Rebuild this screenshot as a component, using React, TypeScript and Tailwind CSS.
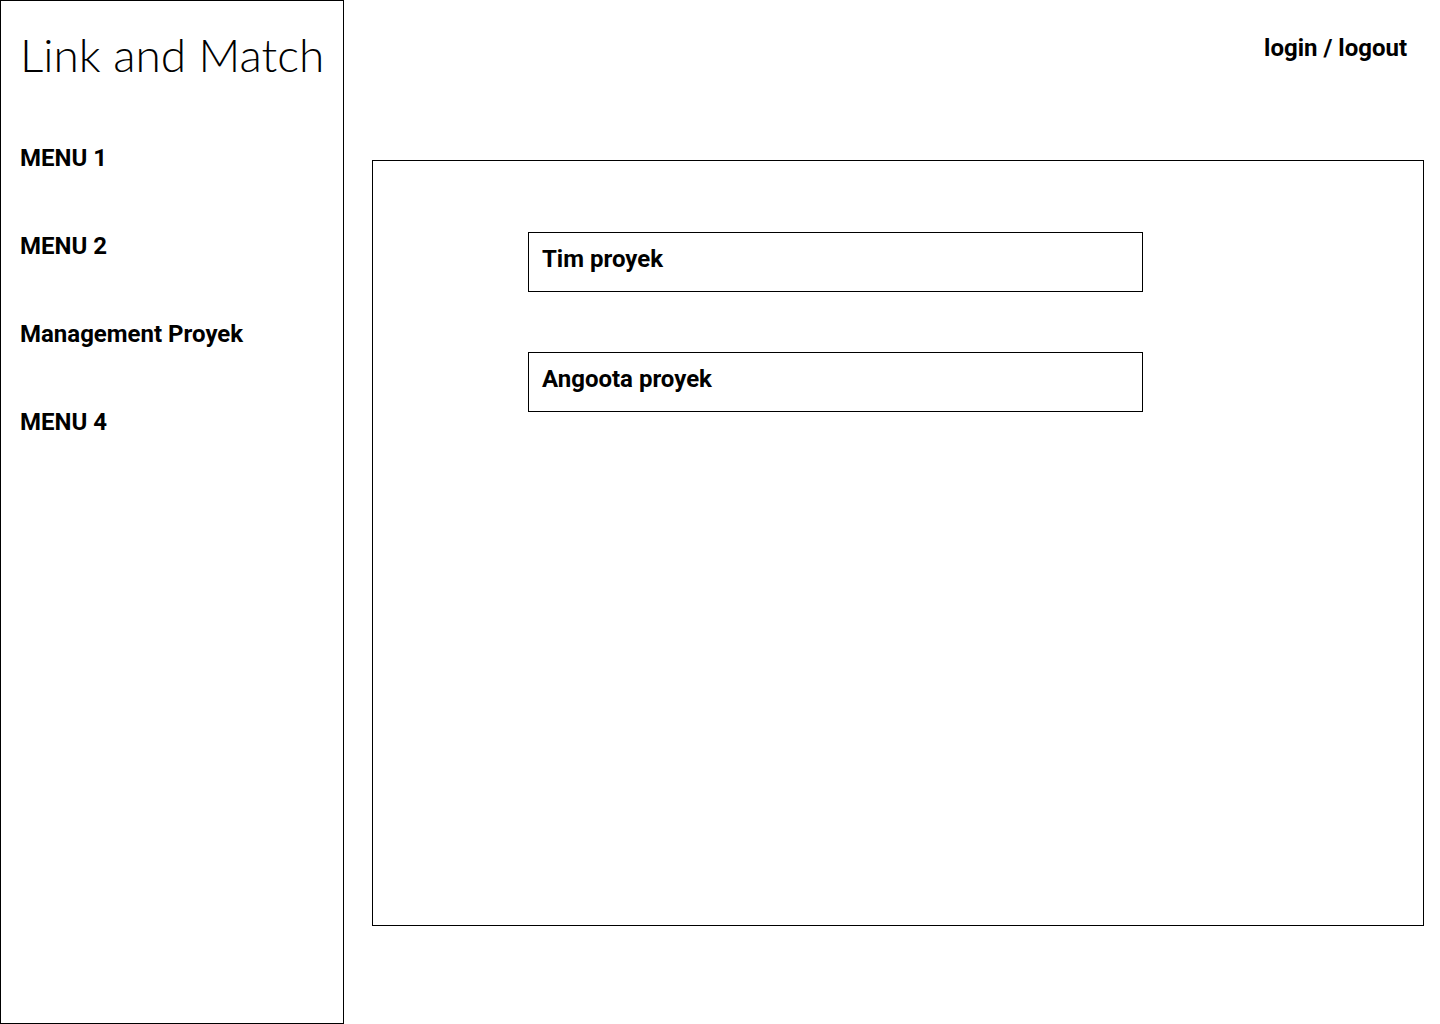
import React from "react";

export default function App() {
  const menus = ["MENU 1", "MENU 2", "Management Proyek", "MENU 4"];
  return (
    <div className="flex w-[1440px] h-[1024px] bg-white text-black" style={{ fontFamily: "Roboto, sans-serif" }}>
      <aside className="w-[344px] h-[1024px] border border-black flex flex-col shrink-0">
        <h1
          className="pl-[19px] pt-[27px] text-[46px] leading-[54px] font-light"
          style={{ fontFamily: "Lato, sans-serif" }}
        >
          Link and Match
        </h1>
        <nav className="flex flex-col gap-[60px] pl-[19px] mt-[62px]">
          {menus.map((m) => (
            <div key={m} className="text-[24px] leading-[28px] font-bold">
              {m}
            </div>
          ))}
        </nav>
      </aside>
      <main className="flex-1 flex flex-col pl-[28px] pr-[16px]">
        <div className="flex justify-end pr-[17px] pt-[34px] h-[160px]">
          <span className="text-[24px] leading-[28px] font-bold">login / logout</span>
        </div>
        <section className="w-[1052px] h-[766px] border border-black flex flex-col gap-[60px] pt-[71px] pl-[155px]">
          <div className="w-[615px] h-[60px] border border-black px-[13px] pt-[12px] text-[24px] leading-[28px] font-bold">
            Tim proyek
          </div>
          <div className="w-[615px] h-[60px] border border-black px-[13px] pt-[12px] text-[24px] leading-[28px] font-bold">
            Angoota proyek
          </div>
        </section>
      </main>
    </div>
  );
}
